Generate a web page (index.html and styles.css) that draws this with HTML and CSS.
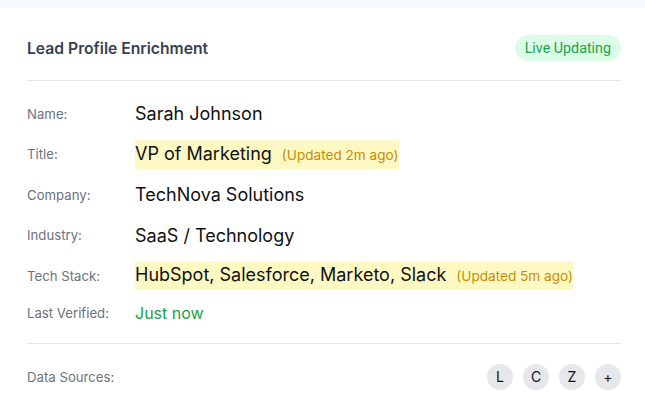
FILE: index.html
```html
<!DOCTYPE html>
<html>
<head>
<meta charset="utf-8">
<link rel="stylesheet" href="styles.css">
</head>
<body>
<div class="card">
  <div class="header">
    <h2 class="title">Lead Profile Enrichment</h2>
    <span class="badge">Live Updating</span>
  </div>
  <div class="fields">
    <div class="row"><span class="label">Name:</span><span class="value">Sarah Johnson</span></div>
    <div class="row"><span class="label">Title:</span><span class="value hl">VP of Marketing<span class="upd">(Updated 2m ago)</span></span></div>
    <div class="row"><span class="label">Company:</span><span class="value">TechNova Solutions</span></div>
    <div class="row"><span class="label">Industry:</span><span class="value">SaaS / Technology</span></div>
    <div class="row"><span class="label">Tech Stack:</span><span class="value hl">HubSpot, Salesforce, Marketo, Slack<span class="upd">(Updated 5m ago)</span></span></div>
    <div class="row last"><span class="label">Last Verified:</span><span class="value green">Just now</span></div>
  </div>
  <div class="sources">
    <span class="label">Data Sources:</span>
    <div class="chips">
      <span class="chip">L</span>
      <span class="chip">C</span>
      <span class="chip">Z</span>
      <span class="chip">+</span>
    </div>
  </div>
</div>
</body>
</html>
```
FILE: styles.css
```css
html, body {
  margin: 0;
  padding: 0;
}
body {
  background: #f8f9fa;
  font-family: Inter, "Noto Sans", sans-serif;
  height: 414px;
  overflow: hidden;
}
.card {
  margin-top: 8px;
  background: #ffffff;
  padding: 27px 24px 24px 27px;
}
.header {
  display: flex;
  justify-content: space-between;
  align-items: center;
  padding-bottom: 19px;
  border-bottom: 1px solid #e5e7eb;
}
.title {
  margin: 0;
  font-size: 15.7px;
  font-weight: 600;
  color: #374151;
}
.badge {
  background: #dcfce7;
  color: #16a34a;
  font-family: Roboto, sans-serif;
  font-size: 14.3px;
  height: 26px;
  line-height: 26px;
  padding: 0 10px;
  border-radius: 13px;
}
.fields {
  display: flex;
  flex-direction: column;
  gap: 13.5px;
  padding: 19px 0 20px;
  border-bottom: 1px solid #e5e7eb;
}
.row {
  display: flex;
  align-items: center;
  height: 27px;
}
.row.last {
  height: 20px;
}
.label {
  width: 108px;
  flex: none;
  font-size: 13.2px;
  color: #6b7280;
}
.value {
  font-size: 18px;
  color: #111111;
  line-height: 27px;
}
.hl {
  background: #fef9c3;
}
.upd {
  margin-left: 10px;
  font-size: 13.6px;
  color: #ca8a04;
}
.green {
  color: #16a34a;
  font-size: 16px;
  line-height: 20px;
}
.sources {
  display: flex;
  justify-content: space-between;
  align-items: center;
  padding-top: 20px;
}
.chips {
  display: flex;
  gap: 10px;
}
.chip {
  width: 26px;
  height: 26px;
  border-radius: 50%;
  background: #e5e7eb;
  color: #111;
  font-size: 14px;
  display: flex;
  align-items: center;
  justify-content: center;
}
```
